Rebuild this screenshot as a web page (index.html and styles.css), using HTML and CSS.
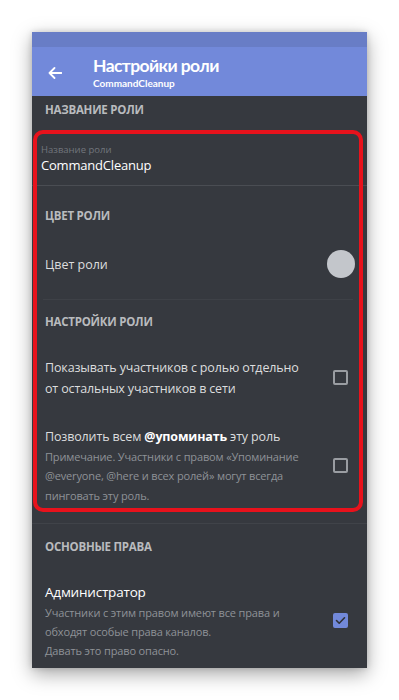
FILE: index.html
```html
<!DOCTYPE html>
<html lang="ru">
<head>
<meta charset="utf-8">
<title>Настройки роли</title>
<link rel="stylesheet" href="styles.css">
</head>
<body>
<div class="phone">
  <div class="statusbar"></div>
  <header class="toolbar">
    <svg class="back" width="14" height="12" viewBox="0 0 14 12"><path d="M13.5 6H1.5M6.5 1L1.5 6L6.5 11" fill="none" stroke="#ffffff" stroke-width="1.8" stroke-linecap="round" stroke-linejoin="round"/></svg>
    <div class="titles">
      <div class="title">Настройки роли</div>
      <div class="subtitle">CommandCleanup</div>
    </div>
  </header>
  <main class="content">
    <div class="section-head first">Название роли</div>
    <div class="input-block">
      <div class="input-label">Название роли</div>
      <div class="input-value">CommandCleanup</div>
    </div>
    <div class="section-head h2">Цвет роли</div>
    <div class="color-row">
      <span class="row-text">Цвет роли</span>
      <span class="swatch"></span>
    </div>
    <div class="section-head h3">Настройки роли</div>
    <div class="check-row r1">
      <div class="row-body">
        <div class="row-title">Показывать участников с ролью отдельно от остальных участников в сети</div>
      </div>
      <span class="box"></span>
    </div>
    <div class="check-row r2">
      <div class="row-body">
        <div class="row-title">Позволить всем <b>@упоминать</b> эту роль</div>
        <div class="note">Примечание. Участники с правом «Упоминание @everyone, @here и всех ролей» могут всегда пинговать эту роль.</div>
      </div>
      <span class="box"></span>
    </div>
    <div class="section-head h4">Основные права</div>
    <div class="check-row r3">
      <div class="row-body">
        <div class="row-title big">Администратор</div>
        <div class="note">Участники с этим правом имеют все права и обходят особые права каналов.<br>Давать это право опасно.</div>
      </div>
      <span class="box checked"><svg width="11" height="9" viewBox="0 0 11 9"><path d="M1.5 4.5L4.2 7.2L9.5 1.8" fill="none" stroke="#2f3136" stroke-width="1.6" stroke-linecap="round" stroke-linejoin="round"/></svg></span>
    </div>
  </main>
  <div class="highlight"></div>
</div>
</body>
</html>
```
FILE: styles.css
```css
* { box-sizing: border-box; }
html, body { margin: 0; padding: 0; background: #ffffff; }
body {
  font-family: "Open Sans", "Noto Sans", sans-serif;
  width: 399px;
  height: 700px;
  overflow: hidden;
}
.phone {
  position: relative;
  width: 335px;
  height: 636px;
  margin: 32px 0 0 32px;
  background: #36393f;
  overflow: hidden;
  box-shadow: 0 6px 18px rgba(0, 0, 0, 0.35), 0 0 6px rgba(0, 0, 0, 0.15);
  display: flex;
  flex-direction: column;
}
.statusbar { height: 15px; background: #687dc6; flex: none; }
.toolbar {
  height: 49px;
  flex: none;
  background: #7289da;
  display: flex;
  align-items: center;
  padding: 2px 0 0 16px;
}
.back { display: block; flex: none; margin-top: 1px; }
.titles { margin-left: 31px; color: #ffffff; }
.title { font-family: "Lato", "Open Sans", sans-serif; font-size: 17.5px; font-weight: 700; line-height: 20px; letter-spacing: -0.6px; }
.subtitle { font-family: "Lato", "Open Sans", sans-serif; font-size: 10px; font-weight: 700; line-height: 14px; }

.content { flex: 1; color: #dcddde; }
.section-head {
  font-size: 11.5px;
  font-weight: 700;
  line-height: 16px;
  text-transform: uppercase;
  color: #b9bbbe;
  padding-left: 13px;
  letter-spacing: -0.25px;
}
.section-head.first { padding-top: 6px; }
.input-block {
  padding: 26px 9px 11px;
  border-bottom: 1px solid #4a4d53;
}
.input-label { font-size: 9.5px; line-height: 12px; color: #72767d; }
.input-value { font-size: 13px; line-height: 18px; color: #ffffff; letter-spacing: -0.2px; }
.section-head.h2 { padding-top: 22px; }
.color-row {
  margin-top: 26px;
  height: 28px;
  padding: 0 12px 0 13px;
  display: flex;
  align-items: center;
  justify-content: space-between;
}
.row-text { font-size: 12.5px; color: #dcddde; }
.swatch { width: 28px; height: 28px; border-radius: 50%; background: #c3c6cb; }
.section-head.h3 { margin-top: 21px; border-top: 1px solid #3e4147; margin-left: 11px; margin-right: 14px; padding-left: 2px; padding-top: 14px; }
.check-row {
  display: flex;
  align-items: center;
  justify-content: space-between;
  padding: 0 19px 0 13px;
}
.check-row.r1 { margin-top: 26.5px; }
.check-row.r2 { margin-top: 27px; padding-bottom: 17.5px; border-bottom: 1px solid #404349; }
.check-row.r3 { margin-top: 27px; }
.row-body { width: 270px; }
.row-title { font-size: 12.5px; line-height: 21px; color: #dcddde; letter-spacing: -0.15px; }
.r1 .row-title { width: 262px; }
.row-title b { font-weight: 700; color: #ffffff; }
.row-title.big { font-size: 13.5px; color: #ffffff; letter-spacing: -0.2px; }
.note { font-size: 11px; line-height: 19.5px; color: #8e9297; letter-spacing: -0.15px; }
.r3 .note { line-height: 19px; }
.box {
  flex: none;
  width: 15px;
  height: 15px;
  border: 2px solid #9a9da2;
  border-radius: 2px;
  display: flex;
  align-items: center;
  justify-content: center;
}
.box.checked { background: #7289da; border-color: #7289da; }
.box.checked svg { display: block; }
.section-head.h4 { padding-top: 15px; }
.highlight {
  position: absolute;
  left: 1px;
  top: 98px;
  width: 330px;
  height: 382px;
  border: 4px solid #e8121c;
  border-radius: 10px;
  pointer-events: none;
}
```
